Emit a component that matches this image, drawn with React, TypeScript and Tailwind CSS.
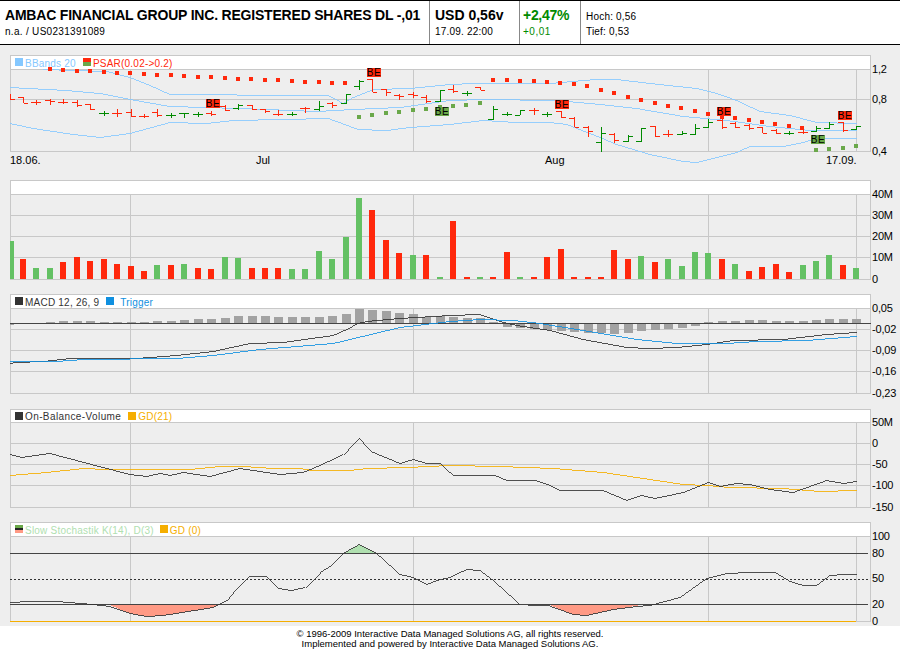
import type { ReactNode } from "react";

const RED = "#ff280c";
const GREEN = "#64c164";
const GRID = "#c8c8c8";
const VERTICALS = [130, 413, 708, 856];

const barX = (i: number) => Math.round(9.6 + i * 13.44);

// helper: points were read off 3x crops, so divide and shift into page coords
type P = [number, number];
const crop = (ox: number, oy: number, pts: P[]) =>
  pts.map(([x, y]) => `${(ox + x / 3).toFixed(1)},${(Math.round(oy + y / 3) + 0.5).toFixed(1)}`).join(" ");

const volumes: [number, "g" | "r"][] = [
  [38, "g"], [20, "r"], [11, "g"], [11, "g"], [17, "r"], [22, "r"], [18, "r"], [20, "r"], [15, "r"], [13, "r"],
  [8, "r"], [14, "g"], [14, "r"], [15, "g"], [11, "r"], [10, "r"], [22, "g"], [21, "g"], [11, "r"], [11, "r"],
  [11, "r"], [10, "g"], [10, "g"], [28, "g"], [20, "g"], [42, "g"], [81, "g"], [69, "r"], [39, "r"], [26, "r"],
  [24, "g"], [24, "r"], [2, "g"], [58, "r"], [2, "r"], [2, "g"], [2, "r"], [27, "r"], [2, "g"], [2, "r"],
  [22, "r"], [30, "r"], [2, "r"], [2, "r"], [2, "r"], [29, "r"], [20, "r"], [23, "g"], [17, "r"], [20, "g"],
  [13, "g"], [27, "g"], [26, "g"], [20, "r"], [15, "g"], [8, "r"], [12, "r"], [15, "r"], [7, "r"], [14, "g"],
  [18, "g"], [24, "g"], [14, "r"], [11, "g"],
];

// left tick, right tick, high, low (3x crop y), colour
const ohlc: [number, number, number, number, "g" | "r"][] = [
  [296, 296, 282, 300, "r"], [292, 310, 292, 310, "r"], [306, 306, 300, 314, "r"], [300, 303, 296, 314, "r"],
  [306, 306, 298, 314, "r"], [305, 314, 300, 320, "r"], [312, 326, 312, 330, "r"], [339, 339, 332, 347, "g"],
  [339, 339, 328, 352, "r"], [337, 349, 328, 352, "r"], [347, 347, 341, 353, "r"], [335, 345, 326, 350, "r"],
  [345, 345, 338, 353, "g"], [338, 338, 338, 353, "g"], [342, 342, 335, 350, "g"], [338, 343, 332, 347, "r"],
  [317, 329, 314, 333, "r"], [323, 314, 313, 330, "g"], [316, 327, 316, 330, "r"], [326, 332, 326, 338, "r"],
  [342, 342, 330, 347, "r"], [342, 342, 335, 347, "g"], [325, 325, 322, 341, "r"], [327, 318, 304, 333, "g"],
  [310, 315, 305, 323, "r"], [309, 283, 283, 314, "g"], [259, 244, 241, 271, "g"], [238, 277, 238, 277, "r"],
  [268, 277, 268, 290, "r"], [286, 289, 281, 298, "r"], [283, 286, 277, 295, "r"], [292, 304, 286, 310, "r"],
  [304, 271, 271, 307, "g"], [268, 274, 256, 280, "r"], [278, 278, 272, 286, "g"], [262, 271, 262, 271, "r"],
  [356, 326, 317, 360, "g"], [341, 341, 335, 347, "g"], [346, 331, 331, 347, "g"], [331, 331, 325, 347, "r"],
  [342, 342, 336, 350, "g"], [334, 352, 334, 355, "r"], [353, 380, 352, 382, "r"], [382, 392, 379, 413, "r"],
  [427, 398, 381, 456, "g"], [402, 420, 400, 429, "r"], [423, 409, 405, 426, "g"], [424, 383, 383, 425, "g"],
  [379, 408, 379, 412, "r"], [402, 402, 390, 412, "r"], [403, 399, 393, 405, "g"], [402, 383, 372, 405, "g"],
  [382, 367, 357, 385, "g"], [361, 382, 350, 386, "r"], [370, 382, 367, 385, "r"], [376, 385, 373, 390, "r"],
  [382, 398, 382, 401, "r"], [389, 398, 386, 402, "r"], [400, 400, 392, 404, "g"], [395, 395, 388, 402, "r"],
  [394, 383, 377, 396, "g"], [384, 372, 365, 387, "g"], [367, 390, 367, 396, "r"], [388, 379, 378, 390, "g"],
];

const psarRed: P[] = [
  [150, 207], [189, 210], [231, 213], [270, 213], [312, 216], [351, 219], [390, 219], [432, 222], [471, 225],
  [513, 225], [552, 228], [594, 231], [633, 231], [675, 234], [714, 237], [753, 237], [795, 240], [834, 240],
  [876, 243], [915, 246], [957, 246], [996, 249], [1035, 249], [1479, 240], [1521, 240], [1560, 243], [1602, 243],
  [1641, 246], [1680, 249], [1722, 252], [1761, 258], [1803, 270], [1842, 279], [1884, 291], [1923, 300],
  [1965, 309], [2004, 318], [2043, 324], [2085, 333], [2124, 342], [2166, 351], [2205, 354], [2247, 360],
  [2286, 366], [2325, 372], [2367, 378], [2406, 384],
];
const psarGreen: P[] = [
  [1077, 351], [1116, 345], [1158, 339], [1197, 336], [1239, 330], [1278, 327], [1320, 321], [1359, 318],
  [1398, 315], [1440, 309], [2448, 450], [2487, 447], [2529, 444], [2568, 438],
];

const bbUpper: P[] = [
  [130, 207], [320, 212], [390, 232], [450, 255], [510, 283], [620, 283], [800, 285], [985, 285], [1030, 308],
  [1060, 290], [1120, 268], [1230, 265], [1350, 253], [1420, 250], [1650, 248], [1750, 240], [1790, 238],
  [1850, 238], [1950, 248], [2090, 265], [2150, 280], [2210, 300], [2280, 332], [2370, 345], [2450, 365], [2570, 368],
];
const bbMid: P[] = [
  [30, 262], [200, 270], [300, 280], [390, 298], [510, 318], [620, 320], [800, 328], [950, 333], [1060, 328],
  [1200, 320], [1350, 300], [1450, 298], [1670, 300], [1800, 312], [1910, 325], [2050, 348], [2180, 360],
  [2310, 378], [2430, 390], [2570, 390],
];
const bbLower: P[] = [
  [30, 370], [100, 385], [220, 402], [300, 410], [390, 398], [510, 365], [620, 368], [700, 360], [850, 358],
  [985, 355], [1075, 388], [1160, 390], [1230, 382], [1350, 373], [1450, 361], [1550, 367], [1650, 365],
  [1700, 372], [1800, 410], [1850, 432], [1950, 462], [2050, 483], [2090, 487], [2150, 472], [2210, 456],
  [2250, 438], [2350, 438], [2410, 425], [2450, 415], [2570, 415],
];

const beTags: [number, number, "g" | "r"][] = [
  [367, 68, "r"], [206, 99, "r"], [435, 107, "g"], [555, 100, "r"], [717, 107, "r"], [838, 111, "r"], [811, 135, "g"],
];

// height above (+) / below (-) the MACD zero line, 3x crop units
const macdHist = [
  -4, 0, 0, 4, 7, 7, 7, 4, 4, 4, 4, 7, 7, 10, 13, 13, 16, 22, 22, 22, 19, 19, 19, 19, 22, 28, 43, 40, 37, 31, 28,
  19, 22, 19, 16, 16, 4, -8, -11, -14, -17, -20, -23, -26, -26, -29, -26, -20, -17, -14, -11, -5, 4, 7, 7, 10, 10,
  7, 7, 7, 10, 13, 13, 13,
];

const macdLine: P[] = [
  [30, 220], [50, 217], [130, 212], [210, 205], [410, 205], [450, 202], [530, 195], [640, 183], [750, 160],
  [850, 156], [1000, 135], [1040, 118], [1075, 100], [1100, 92], [1200, 85], [1350, 74], [1440, 72], [1500, 92],
  [1550, 104], [1650, 120], [1750, 146], [1880, 170], [1950, 173], [2030, 172], [2120, 162], [2200, 150],
  [2350, 147], [2480, 132], [2570, 126],
];
const macdTrigger: P[] = [
  [30, 212], [170, 214], [250, 208], [530, 205], [640, 195], [780, 178], [1000, 158], [1100, 135], [1200, 112],
  [1350, 94], [1440, 87], [1540, 90], [1620, 100], [1750, 120], [1910, 148], [2030, 160], [2180, 160], [2270, 153],
  [2420, 150], [2570, 138],
];

const obv: P[] = [
  [30, 148], [65, 157], [150, 145], [320, 190], [390, 208], [440, 212], [480, 205], [510, 211], [550, 202],
  [630, 214], [720, 190], [840, 208], [910, 200], [960, 180], [1030, 148], [1078, 97], [1120, 142], [1200, 175],
  [1240, 162], [1280, 175], [1320, 175], [1350, 200], [1360, 211], [1485, 211], [1520, 226], [1605, 226],
  [1650, 240], [1680, 256], [1810, 256], [1880, 286], [1925, 270], [1965, 280], [2050, 262], [2125, 232],
  [2160, 244], [2210, 235], [2250, 238], [2310, 253], [2380, 260], [2480, 226], [2530, 235], [2570, 229],
];
const obvGd: P[] = [
  [30, 211], [140, 200], [250, 190], [320, 193], [570, 193], [660, 184], [730, 184], [820, 190], [900, 190],
  [935, 196], [1050, 196], [1100, 190], [1220, 185], [1350, 181], [1500, 182], [1660, 188], [1810, 200],
  [1930, 220], [2050, 237], [2120, 240], [2190, 247], [2350, 250], [2460, 257], [2570, 254],
];

const stochA: P[] = [
  [30, 262], [90, 257], [170, 257], [280, 268], [330, 272], [390, 295], [440, 302], [490, 301], [640, 276],
  [680, 255], [700, 232], [750, 184], [798, 184], [835, 220], [875, 226], [915, 217], [960, 172], [995, 150],
  [1035, 112], [1078, 88], [1130, 115], [1200, 178], [1240, 185], [1280, 208], [1320, 192], [1350, 187], [1400, 162],
  [1440, 166], [1480, 195], [1560, 268],
];
const stochB: P[] = [
  [1585, 270], [1645, 270], [1720, 298], [1760, 300], [1840, 282], [1910, 274], [1950, 269], [2040, 245],
  [2120, 190], [2180, 175], [2250, 170], [2325, 172], [2370, 198], [2410, 210], [2450, 210], [2490, 181],
  [2530, 176], [2570, 178],
];

function Line({ pts, color, oy }: { pts: P[]; color: string; oy: number }) {
  return <polyline points={crop(0, oy, pts)} fill="none" stroke={color} strokeWidth={0.85} />;
}

function HLine({ y, color = GRID, to = 871 }: { y: number; color?: string; to?: number }) {
  return <rect x={10} y={y} width={to - 10} height={1} fill={color} />;
}

function Frame({ from, to, rows }: { from: number; to: number; rows: number[] }) {
  return (
    <>
      <rect x={10} y={from} width={1} height={to - from} fill={GRID} />
      <rect x={870} y={from} width={1} height={to - from} fill={GRID} />
      {VERTICALS.map((x) => (
        <rect key={x} x={x} y={from} width={1} height={to - from} fill={GRID} />
      ))}
      {rows.map((y) => (
        <HLine key={y} y={y} />
      ))}
    </>
  );
}

function Labels({ items }: { items: [string, number][] }) {
  return (
    <>
      {items.map(([t, y]) => (
        <text key={t} x={872} y={y + 4} fill="#000" letterSpacing={-0.2}>
          {t}
        </text>
      ))}
    </>
  );
}

function Panel({
  legend,
  legendHeight,
  top,
  height,
  children,
}: {
  legend?: ReactNode;
  legendHeight: string;
  top: number;
  height: number;
  children: ReactNode;
}) {
  return (
    <section>
      <div className={`ml-[10px] flex w-[861px] items-center border border-[#c8c8c8] bg-white pt-[1px] pl-[4px] text-[10px] tracking-[0.22px] ${legendHeight}`}>
        {legend}
      </div>
      <svg width={900} height={height} viewBox={`0 ${top} 900 ${height}`} shapeRendering="crispEdges" className="block overflow-visible text-[11px]">
        {children}
      </svg>
    </section>
  );
}

const Swatch = ({ className }: { className: string }) => <span className={`mr-[2px] mb-[2px] inline-block size-[8px] ${className}`} />;

function StackedSwatch({ colors }: { colors: string[] }) {
  return (
    <span className="mr-[2px] mb-[2px] flex h-[8px] w-[8px] flex-col">
      {colors.map((c) => (
        <span key={c} className="flex-1" style={{ background: c }} />
      ))}
    </span>
  );
}

function PriceChart() {
  return (
    <>
      <Frame from={70} to={151} rows={[99, 151]} />
      <Line pts={bbUpper} color="#85c8ff" oy={0} />
      <Line pts={bbMid} color="#85c8ff" oy={0} />
      <Line pts={bbLower} color="#85c8ff" oy={0} />
      {psarRed.map(([x, y]) => (
        <rect key={x} x={Math.round(x / 3) - 2} y={Math.round(y / 3) - 2} width={4} height={4} fill={RED} />
      ))}
      {psarGreen.map(([x, y]) => (
        <rect key={x} x={Math.round(x / 3) - 2} y={Math.round(y / 3) - 2} width={4} height={4} fill="#6aa84a" />
      ))}
      {ohlc.map(([l, r, h, lo, c], i) => {
        const x = barX(i);
        const col = c === "g" ? "#008a00" : RED;
        return (
          <g key={i} fill={col}>
            <rect x={x} y={Math.round(h / 3)} width={1} height={Math.max(1, Math.round((lo - h) / 3))} />
            {i > 0 && <rect x={x - 5} y={Math.round(l / 3)} width={5} height={1} />}
            <rect x={x + 1} y={Math.round(r / 3)} width={4} height={1} />
          </g>
        );
      })}
      {beTags.map(([x, y, c]) => (
        <g key={x}>
          <rect x={x} y={y} width={14} height={9} fill={c === "g" ? "#6aa84a" : RED} />
          <text x={x + 7} y={y + 8} textAnchor="middle" fontSize={10} fill="#000" letterSpacing={0.5}>
            BE
          </text>
        </g>
      ))}
      <Labels items={[["1,2", 69], ["0,8", 99], ["0,4", 151]]} />
      <text x={10} y={164}>18.06.</text>
      <text x={256} y={164}>Jul</text>
      <text x={545} y={164}>Aug</text>
      <text x={826} y={164}>17.09.</text>
    </>
  );
}

function VolumeChart() {
  return (
    <>
      <Frame from={195} to={279} rows={[215, 236, 257, 279]} />
      {volumes.map(([h, c], i) => {
        const x = Math.max(10, barX(i) - 3);
        return <rect key={i} x={x} y={279 - h} width={i === 0 ? 4 : 6} height={h} fill={c === "g" ? GREEN : RED} />;
      })}
      <Labels items={[["40M", 194], ["30M", 215], ["20M", 236], ["10M", 257], ["0", 279]]} />
    </>
  );
}

function MacdChart() {
  return (
    <>
      <Frame from={309} to={393} rows={[329, 350, 371, 393]} />
      {macdHist.map((v, i) => {
        if (v === 0) return null;
        const h = Math.round(Math.abs(v) / 3);
        const x = Math.max(10, barX(i) - 4);
        return <rect key={i} x={x} y={v > 0 ? 323 - h : 324} width={i === 0 ? 4 : 9} height={h} fill="#a2a2a2" />;
      })}
      <HLine y={323} color="#444444" />
      <Line pts={macdLine} color="#333333" oy={290} />
      <Line pts={macdTrigger} color="#1090e0" oy={290} />
      <Labels items={[["0,05", 308], ["-0,02", 329], ["-0,09", 350], ["-0,16", 371], ["-0,23", 393]]} />
    </>
  );
}

function ObvChart() {
  return (
    <>
      <Frame from={423} to={507} rows={[443, 464, 485, 507]} />
      <Line pts={obvGd} color="#f5ae00" oy={405} />
      <Line pts={obv} color="#333333" oy={405} />
      <Labels items={[["50M", 422], ["0", 443], ["-50", 464], ["-100", 485], ["-150", 507]]} />
    </>
  );
}

function StochChart() {
  const pink = "#ff9a85";
  return (
    <>
      <Frame from={537} to={621} rows={[]} />
      <polygon
        points={crop(0, 515, [[325, 268], [390, 295], [440, 302], [490, 301], [640, 276], [655, 268]])}
        fill={pink}
      />
      <polygon
        points={crop(0, 515, [[1645, 268], [1720, 298], [1760, 300], [1840, 282], [1915, 270], [1915, 268]])}
        fill={pink}
      />
      <polygon points={crop(0, 515, [[1032, 115], [1078, 88], [1130, 115]])} fill="#b0e0b0" />
      <HLine y={553} color="#444444" to={868} />
      <line x1={10} x2={868} y1={579.5} y2={579.5} stroke="#333333" strokeDasharray="2 2" />
      <HLine y={604} color="#444444" to={868} />
      <HLine y={621} />
      <HLine y={621} color="#f5ae00" to={856} />
      <Line pts={stochA} color="#333333" oy={515} />
      <Line pts={stochB} color="#333333" oy={515} />
      <Labels items={[["100", 536], ["80", 553], ["50", 578], ["20", 604], ["0", 621]]} />
    </>
  );
}

export default function App() {
  return (
    <div className="h-[650px] w-[900px] overflow-hidden bg-white font-['Liberation_Sans',Arial,sans-serif] text-black">
      <header className="flex h-[45px] border-t border-b border-black">
        <div className="w-[429px] pl-[5px]">
          <div className="mt-[4px] text-[14px] leading-[20px] font-bold tracking-[-0.2px] whitespace-nowrap">
            AMBAC FINANCIAL GROUP INC. REGISTERED SHARES DL -,01
          </div>
          <div className="text-[10px] leading-[14px] tracking-[0.3px]">n.a. / US0231391089</div>
        </div>
        <div className="w-[90px] border-l border-[#888888] pl-[5px]">
          <div className="mt-[4px] text-[14px] leading-[20px] font-bold">USD 0,56v</div>
          <div className="text-[10px] leading-[14px] tracking-[0.2px]">17.09. 22:00</div>
        </div>
        <div className="w-[61px] border-l border-[#888888] pl-[3px] text-[#008a00]">
          <div className="mt-[4px] text-[14px] leading-[20px] font-bold tracking-[-0.3px]">+2,47%</div>
          <div className="text-[10px] leading-[14px] tracking-[0.5px]">+0,01</div>
        </div>
        <div className="flex-1 border-l border-[#888888] pt-[8px] pl-[5px] text-[10px] leading-[15px] tracking-[0.2px]">
          <div>Hoch: 0,56</div>
          <div>Tief: 0,53</div>
        </div>
      </header>

      <main className="h-[581px] bg-[#eeeeee] pt-[10px]">
        <Panel
          legendHeight="h-[15px]"
          top={70}
          height={110}
          legend={
            <>
              <Swatch className="bg-[#85c8ff]" />
              <span className="mr-[7px] text-[#85c8ff]">BBands 20</span>
              <StackedSwatch colors={[RED, "#6aa84a"]} />
              <span className="text-[#ff280c]">PSAR(0.02-&gt;0.2)</span>
            </>
          }
        >
          <PriceChart />
        </Panel>
        <Panel legendHeight="h-[15px]" top={195} height={99}>
          <VolumeChart />
        </Panel>
        <Panel
          legendHeight="h-[15px]"
          top={309}
          height={100}
          legend={
            <>
              <Swatch className="bg-[#333333]" />
              <span className="mr-[7px] text-[#333333]">MACD 12, 26, 9</span>
              <Swatch className="bg-[#1090e0]" />
              <span className="ml-[4px] text-[#1090e0]">Trigger</span>
            </>
          }
        >
          <MacdChart />
        </Panel>
        <Panel
          legendHeight="h-[14px]"
          top={423}
          height={99}
          legend={
            <>
              <Swatch className="bg-[#333333]" />
              <span className="mr-[7px] tracking-[0.4px] text-[#333333]">On-Balance-Volume</span>
              <Swatch className="bg-[#f5ae00]" />
              <span className="text-[#f5ae00]">GD(21)</span>
            </>
          }
        >
          <ObvChart />
        </Panel>
        <Panel
          legendHeight="h-[15px]"
          top={537}
          height={89}
          legend={
            <>
              <StackedSwatch colors={["#6aa84a", "#222222", "#ff9a85"]} />
              <span className="mr-[6px] text-[#b0e0b0]">Slow Stochastik K(14), D(3)</span>
              <Swatch className="bg-[#f5ae00]" />
              <span className="text-[#f5ae00]">GD (0)</span>
            </>
          }
        >
          <StochChart />
        </Panel>
      </main>

      <footer className="pt-[3px] text-center text-[9.5px] leading-[10px]">
        <div>© 1996-2009 Interactive Data Managed Solutions AG, all rights reserved.</div>
        <div>Implemented and powered by Interactive Data Managed Solutions AG.</div>
      </footer>
    </div>
  );
}
